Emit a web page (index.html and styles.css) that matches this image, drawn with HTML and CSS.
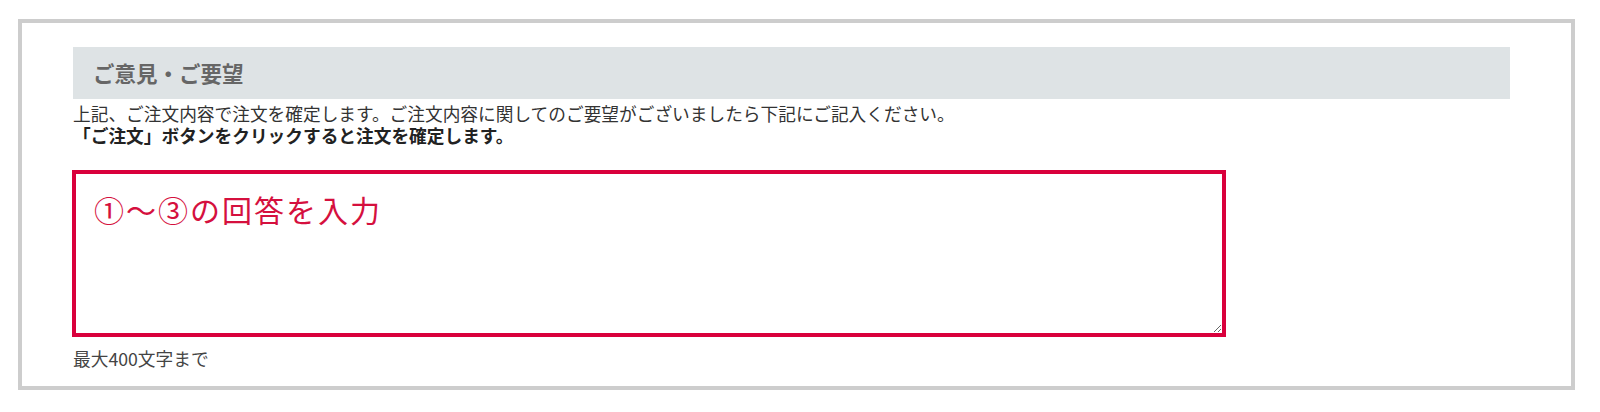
FILE: index.html
```html
<!DOCTYPE html>
<html lang="ja">
<head>
    <meta charset="UTF-8">
    <meta name="viewport" content="width=device-width, initial-scale=1.0">
    <title>ご意見・ご要望</title>
    <link rel="stylesheet" href="styles.css">
</head>
<body>
    <div class="frame">
        <div class="section">
            <h2 class="section-title">ご意見・ご要望</h2>
            <p class="note">上記、ご注文内容で注文を確定します。ご注文内容に関してのご要望がございましたら下記にご記入ください。</p>
            <p class="note note-strong">「ご注文」ボタンをクリックすると注文を確定します。</p>
            <textarea class="comment" id="comment" maxlength="400">①～③の回答を入力</textarea>
            <p class="limit">最大400文字まで</p>
        </div>
    </div>
</body>
</html>
```

FILE: styles.css
```css
body {
    margin: 0;
    background-color: #fff;
    font-family: "Noto Sans CJK JP", "Noto Sans", sans-serif;
    color: #333;
}
.frame {
    box-sizing: border-box;
    width: 1557px;
    height: 371px;
    margin: 19px 0 0 18px;
    border: 4px solid #cdcdcd;
}
.section {
    padding: 24px 61px 0 51px;
}
.section-title {
    margin: 0;
    height: 52px;
    padding-left: 20px;
    background-color: #dee3e5;
    color: #666;
    font-size: 21.5px;
    font-weight: bold;
    line-height: 52px;
}
.note {
    margin: 3px 0 0;
    height: 22px;
    font-size: 17.7px;
    line-height: 22px;
    color: #333;
    white-space: nowrap;
}
.note-strong {
    margin-top: 0;
    font-weight: bold;
    color: #222;
}
.comment {
    display: block;
    box-sizing: border-box;
    width: 1154px;
    height: 167px;
    margin: 24px 0 0 -1px;
    padding: 13px 18px;
    border: 4px solid #d9003c;
    border-radius: 0;
    outline: none;
    font-family: "Noto Sans CJK JP", "Noto Sans", sans-serif;
    font-size: 30px;
    line-height: 45px;
    letter-spacing: 2px;
    color: #d5103e;
    resize: both;
}
.limit {
    margin: 11px 0 0;
    font-size: 17.7px;
    line-height: 21px;
    color: #444;
}
```
